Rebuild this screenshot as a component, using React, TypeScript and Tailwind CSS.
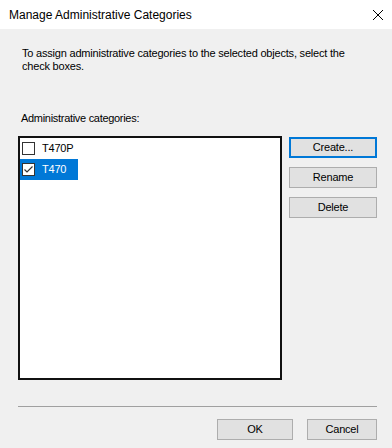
import React from 'react';

const font = { fontFamily: '"Liberation Sans", Arial, sans-serif' };

type Item = { name: string; checked: boolean; selected: boolean };

const items: Item[] = [
  { name: 'T470P', checked: false, selected: false },
  { name: 'T470', checked: true, selected: true },
];

const CheckBox: React.FC<{ checked: boolean }> = ({ checked }) => (
  <span className="w-[13px] h-[13px] border border-[#333333] bg-white flex items-center justify-center shrink-0">
    {checked && (
      <svg width="11" height="11" viewBox="0 0 11 11">
        <path d="M1.5 5.5 L4 8 L9.5 2.5" fill="none" stroke="#333333" strokeWidth="1.2" />
      </svg>
    )}
  </span>
);

const DlgButton: React.FC<{ label: string; focused?: boolean; className?: string }> = ({ label, focused, className }) => (
  <button
    className={`h-[21px] bg-[#e1e1e1] text-[11px] tracking-[-0.2px] text-black flex items-center justify-center shrink-0 ${
      focused ? 'border-2 border-[#0078d7]' : 'border border-[#adadad]'
    } ${className ?? ''}`}
  >
    {label}
  </button>
);

export default function App() {
  return (
    <div className="w-[392px] h-[448px] bg-[#f0f0f0] flex flex-col overflow-hidden" style={font}>
      {/* Title bar */}
      <div className="h-[29px] bg-white flex items-center justify-between pl-[9px] pr-[8px] shrink-0">
        <span className="text-[12px] text-black">Manage Administrative Categories</span>
        <svg width="12" height="12" viewBox="0 0 12 12">
          <path d="M1 1 L11 11 M11 1 L1 11" stroke="#000" strokeWidth="1" />
        </svg>
      </div>

      <div className="flex flex-col pt-[18px] pl-[18px] pr-[15px]">
        <p className="text-[11px] leading-[12.5px] tracking-[-0.2px] text-black pl-[4px] pr-[20px]">
          To assign administrative categories to the selected objects, select the check boxes.
        </p>

        <p className="text-[11px] leading-[13px] tracking-[-0.3px] text-black pl-[3px] mt-[40px]">
          Administrative categories:
        </p>

        <div className="flex mt-[11px] gap-[7px]">
          <div className="w-[264px] h-[244px] shrink-0 bg-white border-2 border-[#111111]">
            <div className="inline-flex flex-col">
              {items.map((it) => (
                <div
                  key={it.name}
                  className={`h-[21px] flex items-center pl-[2px] pr-[5px] ${it.selected ? 'bg-[#0078d7] text-white' : 'text-black'}`}
                >
                  <CheckBox checked={it.checked} />
                  <span className="text-[11px] tracking-[-0.2px] ml-[7px]">{it.name}</span>
                </div>
              ))}
            </div>
          </div>

          <div className="flex flex-col gap-[9px] pt-[1px]">
            <DlgButton label="Create..." focused className="w-[88px]" />
            <DlgButton label="Rename" className="w-[88px]" />
            <DlgButton label="Delete" className="w-[88px]" />
          </div>
        </div>

        <div className="mt-[26px] h-px bg-[#a0a0a0]" />

        <div className="flex justify-end gap-[14px] mt-[12px]">
          <DlgButton label="OK" className="w-[76px]" />
          <DlgButton label="Cancel" className="w-[70px]" />
        </div>
      </div>
    </div>
  );
}
